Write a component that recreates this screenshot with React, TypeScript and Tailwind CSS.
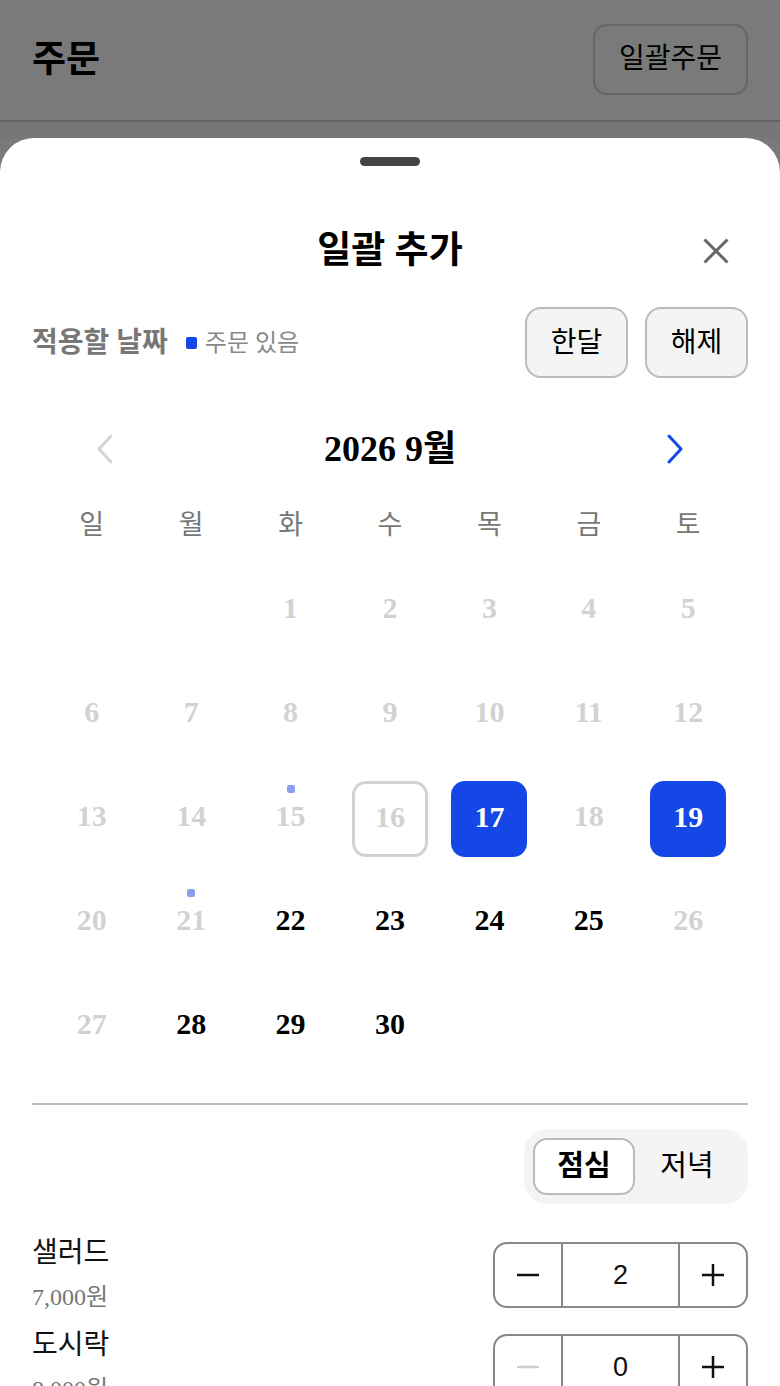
import React from "react";

const BLUE = "#1447e6";

type Cell = { d: number; state: "off" | "on" | "today" | "sel"; dot?: boolean } | null;

function buildCells(): Cell[] {
  const cells: Cell[] = [null, null];
  for (let d = 1; d <= 30; d++) {
    let state: "off" | "on" | "today" | "sel" = "off";
    if (d === 16) state = "today";
    else if (d === 17 || d === 19) state = "sel";
    else if ([22, 23, 24, 25, 28, 29, 30].includes(d)) state = "on";
    cells.push({ d, state, dot: d === 15 || d === 21 });
  }
  return cells;
}

function Minus({ color }: { color: string }) {
  return (
    <svg width="24" height="24" viewBox="0 0 24 24">
      <line x1="1" y1="12" x2="23" y2="12" stroke={color} strokeWidth="2.5" />
    </svg>
  );
}

function Plus() {
  return (
    <svg width="24" height="24" viewBox="0 0 24 24">
      <line x1="1" y1="12" x2="23" y2="12" stroke="#111" strokeWidth="2.5" />
      <line x1="12" y1="1" x2="12" y2="23" stroke="#111" strokeWidth="2.5" />
    </svg>
  );
}

function Stepper({ value }: { value: number }) {
  return (
    <div className="flex h-[66px] w-[255px] rounded-[14px] border-2 border-[#888] overflow-hidden">
      <div className="w-[66px] flex items-center justify-center">
        <Minus color={value === 0 ? "#cfcfcf" : "#111"} />
      </div>
      <div className="flex-1 border-x-2 border-[#888] flex items-center justify-center text-[27px] text-[#111] [font-family:'Liberation_Sans',sans-serif]">
        {value}
      </div>
      <div className="w-[66px] flex items-center justify-center">
        <Plus />
      </div>
    </div>
  );
}

function Item({ name, price, value }: { name: string; price: string; value: number }) {
  return (
    <div className="flex h-[80px] items-center justify-between">
      <div className="flex flex-col">
        <div className="text-[28px] leading-[36px] text-[#111]">{name}</div>
        <div className="mt-[8px] text-[24px] leading-[36px] text-[#777]">{price}</div>
      </div>
      <Stepper value={value} />
    </div>
  );
}

export default function App() {
  const cells = buildCells();
  const weekdays = ["일", "월", "화", "수", "목", "금", "토"];
  return (
    <div className="w-[780px] h-[1386px] overflow-hidden bg-[#7a7a7a] [font-family:'Liberation_Serif','Noto_Sans_CJK_KR',serif]">
      {/* dimmed page header */}
      <div className="h-[122px] border-b-2 border-[#636363] flex items-center justify-between px-8">
        <div className="text-[37px] font-bold text-black leading-none -mt-[2px]">주문</div>
        <div className="w-[155px] h-[71px] -mt-[2px] rounded-[14px] border-2 border-[#666] flex items-center justify-center text-[28px] text-black">
          일괄주문
        </div>
      </div>
      <div className="h-[16px] bg-[#777]" />

      {/* bottom sheet */}
      <div className="bg-white rounded-t-[34px] pt-[19px] px-8 h-[1248px]">
        <div className="mx-auto h-[9px] w-[60px] rounded-[5px] bg-[#444]" />

        <div className="mt-[55px] h-[60px] relative flex items-center justify-center">
          <div className="text-[37px] font-bold text-black">일괄 추가</div>
          <div className="absolute right-[19px] top-1/2 -translate-y-1/2">
            <svg width="26" height="26" viewBox="0 0 26 26">
              <line x1="1.5" y1="1.5" x2="24.5" y2="24.5" stroke="#666" strokeWidth="3" />
              <line x1="24.5" y1="1.5" x2="1.5" y2="24.5" stroke="#666" strokeWidth="3" />
            </svg>
          </div>
        </div>

        <div className="mt-[26px] h-[71px] flex items-center justify-between">
          <div className="flex items-center">
            <span className="text-[28px] font-bold text-[#777]">적용할 날짜</span>
            <span className="ml-[18px] w-[11px] h-[12px] rounded-[2px] bg-[#1447e6]" />
            <span className="ml-[8px] text-[24px] text-[#888]">주문 있음</span>
          </div>
          <div className="flex gap-[17px]">
            <div className="w-[103px] h-[71px] rounded-[16px] border-2 border-[#bbb] bg-[#f4f4f4] flex items-center justify-center text-[28px] text-black">
              한달
            </div>
            <div className="w-[103px] h-[71px] rounded-[16px] border-2 border-[#bbb] bg-[#f4f4f4] flex items-center justify-center text-[28px] text-black">
              해제
            </div>
          </div>
        </div>

        {/* calendar */}
        <div className="mt-[43px] w-[696px] ml-[10px]">
          <div className="h-[56px] flex items-center justify-between px-[55px]">
            <svg width="16" height="30" viewBox="0 0 16 30">
              <polyline points="14,2 2,15 14,28" fill="none" stroke="#d4d4d4" strokeWidth="3" strokeLinecap="round" strokeLinejoin="round" />
            </svg>
            <div className="text-[36px] font-bold text-black">2026 9월</div>
            <svg width="16" height="30" viewBox="0 0 16 30">
              <polyline points="2,2 14,15 2,28" fill="none" stroke={BLUE} strokeWidth="3" strokeLinecap="round" strokeLinejoin="round" />
            </svg>
          </div>

          <div className="mt-[28px] h-[40px] grid grid-cols-7">
            {weekdays.map((w) => (
              <div key={w} className="flex items-center justify-center text-[27px] text-[#777]">
                {w}
              </div>
            ))}
          </div>

          <div className="mt-[28px] grid grid-cols-7 gap-y-[28px]">
            {cells.map((c, i) => (
              <div key={i} className="flex justify-center">
                {c === null ? (
                  <div className="w-[76px] h-[76px]" />
                ) : c.state === "sel" ? (
                  <div className="relative w-[76px] h-[76px] pb-[6px] rounded-[14px] bg-[#1447e6] flex items-center justify-center text-[30px] font-bold text-white">
                    {c.d}
                  </div>
                ) : c.state === "today" ? (
                  <div className="relative w-[76px] h-[76px] pb-[6px] rounded-[14px] border-[3px] border-[#d2d2d2] flex items-center justify-center text-[30px] font-bold text-[#d2d2d2]">
                    {c.d}
                  </div>
                ) : (
                  <div
                    className={
                      c.state === "on"
                        ? "relative w-[76px] h-[76px] pb-[8px] flex items-center justify-center text-[30px] font-bold text-black"
                        : "relative w-[76px] h-[76px] pb-[8px] flex items-center justify-center text-[30px] font-bold text-[#d2d2d2]"
                    }
                  >
                    {c.dot && (
                      <span className="absolute top-[4px] left-1/2 -translate-x-1/2 w-[8px] h-[8px] rounded-[2px] bg-[#8aa0ec]" />
                    )}
                    {c.d}
                  </div>
                )}
              </div>
            ))}
          </div>
        </div>

        <div className="mt-[38px] h-[2px] bg-[#bbb]" />

        <div className="mt-[24px] flex justify-end">
          <div className="w-[224px] h-[75px] rounded-[24px] bg-[#f4f4f4] p-[9px] flex">
            <div className="w-[102px] h-[57px] rounded-[14px] border-2 border-[#bbb] bg-white flex items-center justify-center text-[29px] font-bold text-black">
              점심
            </div>
            <div className="flex-1 flex items-center justify-center text-[29px] text-black">저녁</div>
          </div>
        </div>

        <div className="mt-[31px] flex flex-col gap-[12px]">
          <Item name="샐러드" price="7,000원" value={2} />
          <Item name="도시락" price="8,000원" value={0} />
        </div>
      </div>
    </div>
  );
}
